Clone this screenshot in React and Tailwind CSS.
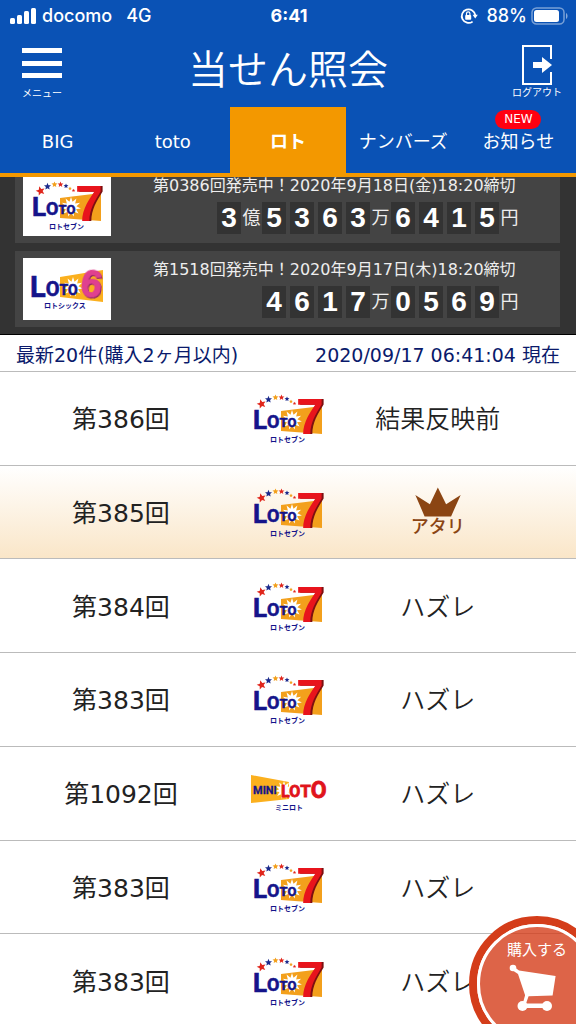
import React, { useState } from 'react';

const tabs = ['BIG', 'toto', 'ロト', 'ナンバーズ', 'お知らせ'];

const jackpots = [
  {
    game: 'loto7',
    round: '第0386回発売中！',
    deadline: '2020年9月18日(金)18:20締切',
    amount: [['3', '億'], ['5363', '万'], ['6415', '円']]
  },
  {
    game: 'loto6',
    round: '第1518回発売中！',
    deadline: '2020年9月17日(木)18:20締切',
    amount: [['4617', '万'], ['0569', '円']]
  }
];

const results = [
  { id: 1, round: '第386回', game: 'loto7', result: '結果反映前' },
  { id: 2, round: '第385回', game: 'loto7', win: true },
  { id: 3, round: '第384回', game: 'loto7', result: 'ハズレ' },
  { id: 4, round: '第383回', game: 'loto7', result: 'ハズレ' },
  { id: 5, round: '第1092回', game: 'mini', result: 'ハズレ' },
  { id: 6, round: '第383回', game: 'loto7', result: 'ハズレ' },
  { id: 7, round: '第383回', game: 'loto7', result: 'ハズレ' }
];

const starPoints = (cx, cy, r, inner = 0.45, spikes = 5) => {
  const points = [];
  for (let i = 0; i < spikes * 2; i++) {
    const radius = i % 2 === 0 ? r : r * inner;
    const angle = (Math.PI * i) / spikes - Math.PI / 2;
    points.push(`${(cx + radius * Math.cos(angle)).toFixed(2)},${(cy + radius * Math.sin(angle)).toFixed(2)}`);
  }
  return points.join(' ');
};

const Loto7Logo = () => (
  <svg viewBox="0 0 70 50" className="h-[50px] w-[70px] overflow-visible" role="img" aria-label="LOTO7">
    <polygon points="28,18 69,13 69,41 28,38" fill="#f3a01c" />
    <polygon points={starPoints(8.5, 11, 4.8)} fill="#e0261c" transform="rotate(-15 8.5 11)" />
    <polygon points={starPoints(15.5, 6.5, 3.7)} fill="#1b2a8c" />
    <polygon points={starPoints(22.5, 4.5, 3.1)} fill="#f3a01c" />
    <polygon points={starPoints(28.5, 4.5, 3)} fill="#e0261c" />
    <polygon points={starPoints(34, 6, 2.6)} fill="#1b2a8c" />
    <polygon points={starPoints(38, 8.5, 2)} fill="#f3a01c" />
    <polygon points={starPoints(41.5, 10.5, 1.8)} fill="#e0261c" />
    <polygon points={starPoints(39, 27, 10, 0.55, 11)} fill="#fff" />
    <text x="0" y="36" fontWeight="700" fill="#14148a" stroke="#14148a" strokeWidth="0.6" className="font-['Roboto',sans-serif]">
      <tspan fontSize="26">L</tspan>
      <tspan fontSize="18" dy="-1">O</tspan>
      <tspan fontSize="13" dy="-1">TO</tspan>
    </text>
    <text
      x="43"
      y="41"
      fontSize="50"
      fontWeight="700"
      fill="#e8141c"
      className="font-['Liberation_Sans',sans-serif] drop-shadow-[2px_0_0_#7d1010]"
    >
      7
    </text>
    <text x="17" y="49" fontSize="7" fontWeight="700" fill="#14148a" className="font-['Noto_Sans_CJK_JP',sans-serif]">
      ロトセブン
    </text>
  </svg>
);

const Loto6Logo = () => (
  <svg viewBox="0 0 74 42" className="h-[42px] w-[74px] overflow-visible" role="img" aria-label="LOTO6">
    <polygon points="30,9 73,2 73,34 30,29" fill="#fbb01e" />
    <polygon points={starPoints(43, 19, 10, 0.55, 11)} fill="#fff" />
    <text x="0" y="29" fontWeight="700" fill="#14148a" stroke="#14148a" strokeWidth="0.6" className="font-['Roboto',sans-serif]">
      <tspan fontSize="29">L</tspan>
      <tspan fontSize="20" dy="-1">O</tspan>
      <tspan fontSize="14" dy="-1">TO</tspan>
    </text>
    <text
      x="51"
      y="29"
      fontSize="38"
      fontWeight="700"
      fill="#e0408f"
      stroke="#e0408f"
      strokeWidth="1"
      transform="rotate(8 61 16)"
      className="font-['Liberation_Sans',sans-serif] drop-shadow-[1px_1px_0_#8e2468]"
    >
      6
    </text>
    <text x="14" y="40" fontSize="7" fontWeight="700" fill="#14148a" className="font-['Noto_Sans_CJK_JP',sans-serif]">
      ロトシックス
    </text>
  </svg>
);

const MiniLotoLogo = () => (
  <svg viewBox="0 0 76 38" className="h-[38px] w-[76px] overflow-visible" role="img" aria-label="MINI LOTO">
    <polygon points="1,1 39,8 39,25 1,29" fill="#fbb01e" />
    <polygon points={starPoints(34, 16, 9, 0.55, 11)} fill="#fff" />
    <g fontWeight="700" className="font-['Roboto',sans-serif]">
      <text x="3" y="20" fontSize="11" fill="#14148a" stroke="#14148a" strokeWidth="0.3">MINI</text>
      <text x="31" y="24" fill="#e0141c" stroke="#e0141c" strokeWidth="0.8">
        <tspan fontSize="16" dy="-1">L</tspan>
        <tspan fontSize="16">O</tspan>
        <tspan fontSize="17">T</tspan>
        <tspan fontSize="23" dy="1">O</tspan>
      </text>
    </g>
    <text x="25" y="36" fontSize="7" fontWeight="700" fill="#14148a" className="font-['Noto_Sans_CJK_JP',sans-serif]">
      ミニロト
    </text>
  </svg>
);

const GameLogo = ({ game }) => {
  if (game === 'loto6') return <Loto6Logo />;
  if (game === 'mini') return <MiniLotoLogo />;
  return <Loto7Logo />;
};

const StatusBar = () => (
  <div className="grid h-8 grid-cols-3 items-center pr-2 pl-2.5 font-['Inter',sans-serif] text-lg leading-6">
    <div className="flex items-center font-medium">
      <svg viewBox="0 0 26 17" className="mr-1.5 h-[17px] w-[26px]" fill="currentColor">
        <rect x="0" y="10" width="5" height="6" rx="1.5" />
        <rect x="7" y="7" width="5" height="9" rx="1.5" />
        <rect x="14" y="3" width="5" height="13" rx="1.5" />
        <rect x="21" y="0" width="5" height="16" rx="1.5" />
      </svg>
      <span>docomo</span>
      <span className="ml-3.5">4G</span>
    </div>
    <div className="text-center font-bold">6:41</div>
    <div className="flex items-center justify-end font-medium">
      <svg viewBox="0 0 18 18" className="mr-2 size-[18px]" fill="none" stroke="currentColor" strokeWidth="1.8">
        <path d="M12.6 14.6A6.8 6.8 0 1 1 15.3 8.2" />
        <path d="M12.6 7.8h5.2l-2.6 3.6z" fill="currentColor" stroke="none" />
        <rect x="5.2" y="8" width="6" height="4.8" rx="0.8" fill="currentColor" stroke="none" />
        <path d="M6.5 8V6.6a1.7 1.7 0 0 1 3.4 0V8" strokeWidth="1.2" />
      </svg>
      <span>88%</span>
      <svg viewBox="0 0 37 18" className="ml-1 h-[18px] w-[37px]">
        <rect x="1" y="1" width="32" height="16" rx="4.5" fill="none" stroke="#fff" strokeOpacity="0.45" strokeWidth="1.5" />
        <rect x="3" y="3" width="25" height="12" rx="2.5" fill="#fff" />
        <path d="M35 6v6c2-1 2-5 0-6z" fill="#fff" fillOpacity="0.5" />
      </svg>
    </div>
  </div>
);

const TitleBar = () => (
  <div className="flex h-[75px] items-start justify-between pr-3.5 pl-5">
    <button type="button" className="flex w-11 flex-col items-center pt-4 text-[10px] leading-4">
      <svg viewBox="0 0 40 30" className="h-[30px] w-10" fill="currentColor">
        <rect y="0" width="40" height="5" />
        <rect y="13" width="40" height="5" />
        <rect y="25" width="40" height="5" />
      </svg>
      <span className="mt-2 whitespace-nowrap">メニュー</span>
    </button>
    <h1 className="pt-2.5 text-[40px] leading-[56px] font-[350]">当せん照会</h1>
    <button type="button" className="flex w-[50px] flex-col items-center pt-3 text-[10px] leading-4">
      <svg viewBox="0 0 32 42" className="h-[42px] w-8" fill="none" stroke="currentColor" strokeWidth="2">
        <path d="M30 15V2H2v38h28V28" />
        <path d="M12 18h9v-5l10 8-10 8v-5h-9z" fill="currentColor" stroke="none" />
      </svg>
      <span className="-mt-px whitespace-nowrap">ログアウト</span>
    </button>
  </div>
);

const JackpotCard = ({ item }) => (
  <div className="flex h-[76px] items-start bg-[#444] pr-10 pl-2 text-[#eee]">
    <div className="mt-[7px] flex h-[62px] w-[88px] shrink-0 items-center justify-center bg-white">
      <GameLogo game={item.game} />
    </div>
    <div className="ml-[42px] flex flex-1 flex-col pt-2">
      <div className="flex text-base leading-[22px] whitespace-nowrap">
        <span>{item.round}</span>
        <span>{item.deadline}</span>
      </div>
      <div className="mt-[5px] flex justify-end">
        {item.amount.map(([digits, unit]) => (
          <div key={unit} className="flex items-center">
            <div className="flex gap-1">
              {digits.split('').map((digit, i) => (
                <span
                  key={i}
                  className="h-8 w-6 bg-[#333] text-center font-['Liberation_Sans',sans-serif] text-[28px] leading-8 font-bold text-white"
                >
                  {digit}
                </span>
              ))}
            </div>
            <span className="w-[21px] text-center text-lg leading-8">{unit}</span>
          </div>
        ))}
      </div>
    </div>
  </div>
);

const WinMark = () => (
  <div className="flex flex-col items-center text-[#8b4513]">
    <svg viewBox="112 79 139 89" className="h-[30px] w-[46px]" fill="currentColor">
      <polygon points="113,102 157,130 181,80 206,130 250,102 221,167 141,167" />
    </svg>
    <span className="text-[18px] leading-5 font-medium">アタリ</span>
  </div>
);

const ResultRow = ({ item }) => (
  <li
    className={`grid grid-cols-[42fr_16fr_36fr_6fr] items-center justify-items-center border-b border-[#bbb] text-[25px] leading-8 whitespace-nowrap text-[#222] ${
      item.win ? 'bg-linear-to-b from-white to-[#fae6c8]' : 'bg-white'
    }`}
  >
    <span className="pt-1">{item.round}</span>
    <GameLogo game={item.game} />
    {item.win ? <WinMark /> : <span className="pt-1 font-[350]">{item.result}</span>}
  </li>
);

const App = () => {
  const [activeTab, setActiveTab] = useState('ロト');

  return (
    <div className="relative flex h-screen flex-col overflow-hidden bg-white font-['DejaVu_Sans','Noto_Sans_CJK_JP',sans-serif]">
      <header className="z-10 shrink-0 bg-[#0a52b5] text-white">
        <StatusBar />
        <TitleBar />
        <nav className="grid grid-cols-5 border-b-4 border-[#f39800]">
          {tabs.map((tab) => (
            <button
              key={tab}
              type="button"
              onClick={() => setActiveTab(tab)}
              className={`relative h-[66px] pt-1 text-lg whitespace-nowrap ${
                activeTab === tab ? 'bg-[#f39800] font-bold' : ''
              }`}
            >
              {tab}
              {tab === 'お知らせ' && (
                <span className="absolute top-[3px] left-1/2 h-[19px] w-[46px] -translate-x-1/2 rounded-full bg-[#ff0010] text-center text-xs leading-[19px]">
                  NEW
                </span>
              )}
            </button>
          ))}
        </nav>
      </header>

      <main className="-mt-2.5 flex-1 overflow-hidden">
        <section className="flex flex-col gap-2 border-b border-black bg-[#333] pr-4 pb-[7px] pl-[15px]">
          {jackpots.map((item) => (
            <JackpotCard key={item.game} item={item} />
          ))}
        </section>

        <div className="flex h-[37px] items-center justify-between border-b border-[#bbb] px-4 pt-1 text-[19px] leading-6 whitespace-nowrap text-[#0a1a6b]">
          <h2>最新20件(購入2ヶ月以内)</h2>
          <p>2020/09/17 06:41:04 現在</p>
        </div>

        <ul className="grid min-h-[656px] auto-rows-fr">
          {results.map((item) => (
            <ResultRow key={item.id} item={item} />
          ))}
        </ul>
      </main>

      <button
        type="button"
        className="absolute -right-[29px] -bottom-7 z-20 flex size-[136px] flex-col items-center rounded-full border-8 border-[#d43d1a] text-[15px] leading-5 text-white"
      >
        <span className="flex size-[120px] shrink-0 flex-col items-center rounded-full border-[3px] border-white bg-[#d43d1a]/80 pt-[13px]">
          <span>購入する</span>
          <svg viewBox="0 0 48 48" className="mt-1 mr-2 size-12" fill="#fff">
            <circle cx="4" cy="4" r="3.3" />
            <path d="M4 2l6 4.500 36.600 5.500-3 19.500-24 .8-2.500 7-3-1 2-7L9 10 3 6z" />
            <circle cx="13.500" cy="42" r="5" />
            <circle cx="38" cy="42" r="5" />
            <path d="M13 39.500h25v4.500H13z" />
          </svg>
        </span>
      </button>
    </div>
  );
};

export default App;
